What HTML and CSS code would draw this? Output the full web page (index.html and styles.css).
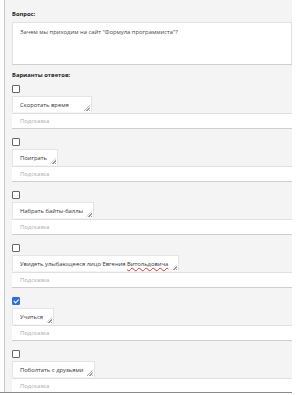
FILE: index.html
```html
<!DOCTYPE html>
<html lang="ru">
<head>
    <meta charset="UTF-8">
    <title>Вопрос</title>
    <link rel="stylesheet" href="styles.css">
</head>
<body>
    <div class="page">
        <div class="panel">
            <!-- Вопрос -->
            <div class="label">Вопрос:</div>
            <div class="question">Зачем мы приходим на сайт "Формула программиста"?</div>

            <!-- Варианты -->
            <div class="label label-answers">Варианты ответов:</div>

            <div class="item">
                <span class="check"></span>
                <div><span class="answer answer-wide">Скоротать время</span></div>
                <div class="hint">Подсказка</div>
            </div>
            <div class="item">
                <span class="check"></span>
                <div><span class="answer">Поиграть</span></div>
                <div class="hint">Подсказка</div>
            </div>
            <div class="item">
                <span class="check"></span>
                <div><span class="answer">Набрать байты-баллы</span></div>
                <div class="hint">Подсказка</div>
            </div>
            <div class="item">
                <span class="check"></span>
                <div><span class="answer">Увидеть улыбающееся лицо Евгения <span class="typo">Витольдовича</span></span></div>
                <div class="hint">Подсказка</div>
            </div>
            <div class="item">
                <span class="check checked"></span>
                <div><span class="answer">Учиться</span></div>
                <div class="hint">Подсказка</div>
            </div>
            <div class="item">
                <span class="check"></span>
                <div><span class="answer">Поболтать с друзьями</span></div>
                <div class="hint">Подсказка</div>
            </div>
        </div>
    </div>
</body>
</html>
```

FILE: styles.css
```css
body {
    margin: 0;
    padding: 0;
    background-color: #fff;
    font-family: 'Open Sans', sans-serif;
    font-size: 5.85px;
    color: #333;
    height: 395px;
    overflow: hidden;
}
.page {
    width: 292px;
    border-bottom: 1px solid #8a8a8a;
}
.panel {
    margin-left: 4px;
    border-left: 1px solid #c8c8c8;
    background-color: #f4f4f4;
    padding: 9px 0 0 7px;
    height: 383px;
    overflow: hidden;
}
.label {
    font-weight: bold;
    font-size: 5.8px;
    line-height: 10px;
    height: 10px;
    color: #222;
}
.question {
    margin-top: 3px;
    height: 35px;
    background-color: #fff;
    border: 1px solid #e2e2e2;
    border-bottom-color: #cfcfcf;
    padding: 4px 7px 2px;
    line-height: 10px;
    color: #444;
}
.label-answers {
    margin-top: 5px;
}
.item {
    margin-top: 5px;
}
.item + .item {
    margin-top: 9px;
}
.check {
    display: block;
    width: 6px;
    height: 6px;
    border: 1px solid #666;
    border-radius: 1px;
    background-color: #fff;
    margin-bottom: 3px;
}
.checked {
    background-color: #2f6fd6;
    border-color: #2f6fd6;
    position: relative;
}
.checked::after {
    content: "";
    position: absolute;
    left: 2px;
    top: 0;
    width: 1.5px;
    height: 3.5px;
    border: solid #fff;
    border-width: 0 1px 1px 0;
    transform: rotate(45deg);
}
.answer {
    display: inline-block;
    position: relative;
    background-color: #fff;
    border: 1px solid #e4e4e4;
    border-bottom: none;
    padding: 3px 10px 2px 7px;
    line-height: 10px;
    color: #333;
}
.answer-wide {
    padding-right: 22px;
}
.answer::after {
    content: "";
    position: absolute;
    right: 1px;
    bottom: 1px;
    width: 6px;
    height: 6px;
    background: repeating-linear-gradient(-45deg, #999 0 1px, transparent 1px 2px);
    clip-path: polygon(100% 0, 100% 100%, 0 100%);
}
.typo {
    text-decoration: underline wavy #d33;
    text-decoration-thickness: 1px;
}
.hint {
    margin-top: 1px;
    background-color: #fff;
    border-top: 1px solid #e0e0e0;
    border-bottom: 1px solid #cfcfcf;
    padding: 3px 8px 2px;
    line-height: 9px;
    color: #aaa;
    margin-right: -1px;
}
```
